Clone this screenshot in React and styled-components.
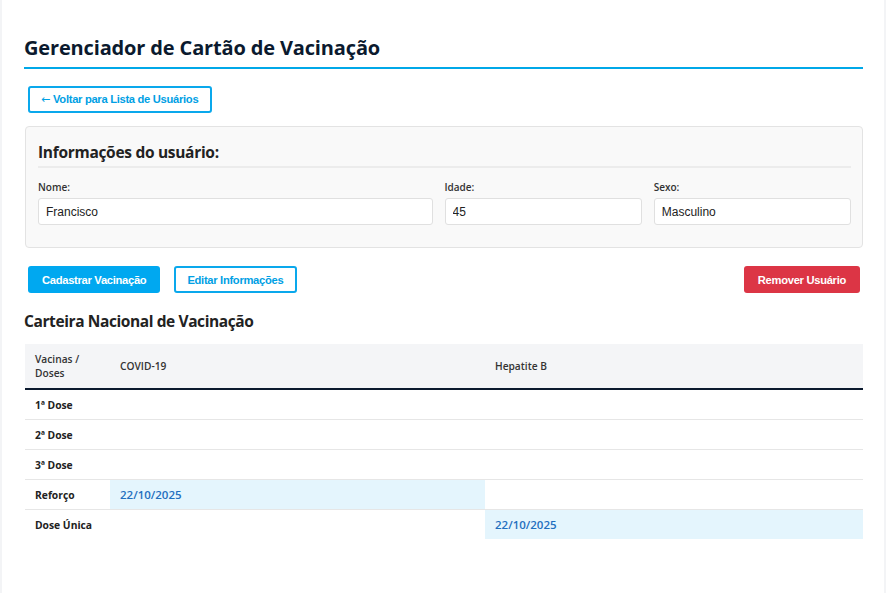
import React from 'react';
import styled, { createGlobalStyle } from 'styled-components';

const GlobalStyle = createGlobalStyle`
  html, body {
    margin: 0;
    padding: 0;
    background: #f3f4f6;
  }
  body {
    font-family: 'Open Sans', 'Noto Sans', sans-serif;
    color: #222;
  }
`;

const user = { nome: 'Francisco', idade: '45', sexo: 'Masculino' };

const vacinas = ['COVID-19', 'Hepatite B'];

const doses = [
  { label: '1ª Dose', datas: {} },
  { label: '2ª Dose', datas: {} },
  { label: '3ª Dose', datas: {} },
  { label: 'Reforço', datas: { 'COVID-19': '22/10/2025' } },
  { label: 'Dose Única', datas: { 'Hepatite B': '22/10/2025' } },
];

const App = () => {
  return (
    <>
      <GlobalStyle />
      <Page>
        <Title>Gerenciador de Cartão de Vacinação</Title>

        <BackRow>
          <OutlineButton>
            <Arrow>←</Arrow> Voltar para Lista de Usuários
          </OutlineButton>
        </BackRow>

        <InfoPanel>
          <PanelTitle>Informações do usuário:</PanelTitle>
          <FieldGrid>
            <Field>
              <Label>Nome:</Label>
              <Input readOnly value={user.nome} />
            </Field>
            <Field>
              <Label>Idade:</Label>
              <Input readOnly value={user.idade} />
            </Field>
            <Field>
              <Label>Sexo:</Label>
              <Input readOnly value={user.sexo} />
            </Field>
          </FieldGrid>
        </InfoPanel>

        <Actions>
          <ButtonGroup>
            <SolidButton>Cadastrar Vacinação</SolidButton>
            <OutlineButton>Editar Informações</OutlineButton>
          </ButtonGroup>
          <SolidButton danger>Remover Usuário</SolidButton>
        </Actions>

        <SectionTitle>Carteira Nacional de Vacinação</SectionTitle>

        <Table>
          <colgroup>
            <col style={{ width: 85 }} />
            <col style={{ width: 375 }} />
            <col />
          </colgroup>
          <thead>
            <tr>
              <Th>
                Vacinas /<br />
                Doses
              </Th>
              {vacinas.map((v) => (
                <Th key={v}>{v}</Th>
              ))}
            </tr>
          </thead>
          <tbody>
            {doses.map((dose) => (
              <Row key={dose.label}>
                <DoseCell>{dose.label}</DoseCell>
                {vacinas.map((v) => (
                  <Td key={v} filled={!!dose.datas[v]}>
                    {dose.datas[v] || ''}
                  </Td>
                ))}
              </Row>
            ))}
          </tbody>
        </Table>
      </Page>
    </>
  );
};

const Page = styled.main`
  width: 882px;
  min-height: 593px;
  margin: 0 auto;
  box-sizing: border-box;
  background: #fff;
  padding: 34px 21px 40px 22px;
`;

const Title = styled.h1`
  margin: 0;
  font-size: 20px;
  font-weight: 700;
  letter-spacing: -0.15px;
  color: #0b1a2e;
  line-height: 28px;
  padding-bottom: 5px;
  border-bottom: 2px solid #00a8e8;
`;

const BackRow = styled.div`
  display: flex;
  padding: 17px 0 13px 4px;
`;

const buttonBase = `
  font-family: 'Liberation Sans', Arial, sans-serif;
  font-size: 11.2px;
  letter-spacing: -0.3px;
  font-weight: 700;
  height: 27px;
  padding: 0 12px;
  border-radius: 3px;
  cursor: pointer;
  box-sizing: border-box;
`;

const OutlineButton = styled.button`
  ${buttonBase}
  padding: 0 12px 0 11px;
  background: #fff;
  color: #00a0e4;
  border: 2px solid #0aa8ec;
`;

const Arrow = styled.span`
  font-family: 'DejaVu Sans', sans-serif;
  font-weight: 400;
  font-size: 11px;
  letter-spacing: 0;
`;

const SolidButton = styled.button`
  ${buttonBase}
  padding: 0 14px;
  color: #fff;
  border: none;
  background: ${({ danger }) => (danger ? '#dc3545' : '#00a8f0')};
`;

const InfoPanel = styled.section`
  margin-left: 1px;
  background: #f9f9f9;
  border: 1px solid #e3e3e3;
  border-radius: 4px;
  padding: 12px 11px 22px 12px;
`;

const PanelTitle = styled.h2`
  margin: 0 0 11px;
  font-size: 15.5px;
  letter-spacing: -0.3px;
  font-weight: 700;
  color: #222;
  line-height: 26px;
  padding-bottom: 1px;
  border-bottom: 2px solid #ececec;
`;

const FieldGrid = styled.div`
  display: grid;
  grid-template-columns: 2fr 1fr 1fr;
  gap: 12px;
`;

const Field = styled.div`
  display: flex;
  flex-direction: column;
  gap: 3px;
`;

const Label = styled.label`
  font-size: 10px;
  font-weight: 600;
  color: #333;
  line-height: 16px;
`;

const Input = styled.input`
  height: 27px;
  box-sizing: border-box;
  border: 1px solid #e0e0e0;
  border-radius: 3px;
  background: #fff;
  padding: 0 7px;
  font-family: 'Liberation Sans', Arial, sans-serif;
  font-size: 12px;
  color: #222;
  outline: none;
`;

const Actions = styled.div`
  display: flex;
  justify-content: space-between;
  align-items: center;
  padding: 18px 3px 0 4px;
`;

const ButtonGroup = styled.div`
  display: flex;
  gap: 14px;
`;

const SectionTitle = styled.h2`
  margin: 16px 0 11px;
  font-size: 15.5px;
  letter-spacing: -0.4px;
  font-weight: 700;
  color: #222;
  line-height: 24px;
`;

const Table = styled.table`
  width: calc(100% - 1px);
  margin-left: 1px;
  border-collapse: collapse;
  table-layout: fixed;
  font-size: 10.3px;
`;

const Th = styled.th`
  text-align: left;
  font-weight: 600;
  font-size: 10.2px;
  color: #333;
  background: #f4f5f7;
  padding: 8px 10px;
  height: 27px;
  line-height: 14px;
  border-bottom: 2px solid #0b1a2e;
`;

const Row = styled.tr`
  &:last-child td {
    border-bottom: none;
  }
`;

const DoseCell = styled.td`
  font-weight: 700;
  color: #222;
  padding: 0 10px;
  height: 29px;
  border-bottom: 1px solid #e6e6e6;
`;

const Td = styled.td`
  padding: 0 10px;
  height: 29px;
  font-size: 11.5px;
  font-weight: 600;
  color: #1f6fbf;
  background: ${({ filled }) => (filled ? '#e4f5fd' : '#fff')};
  border-bottom: 1px solid #e6e6e6;
`;

export default App;
